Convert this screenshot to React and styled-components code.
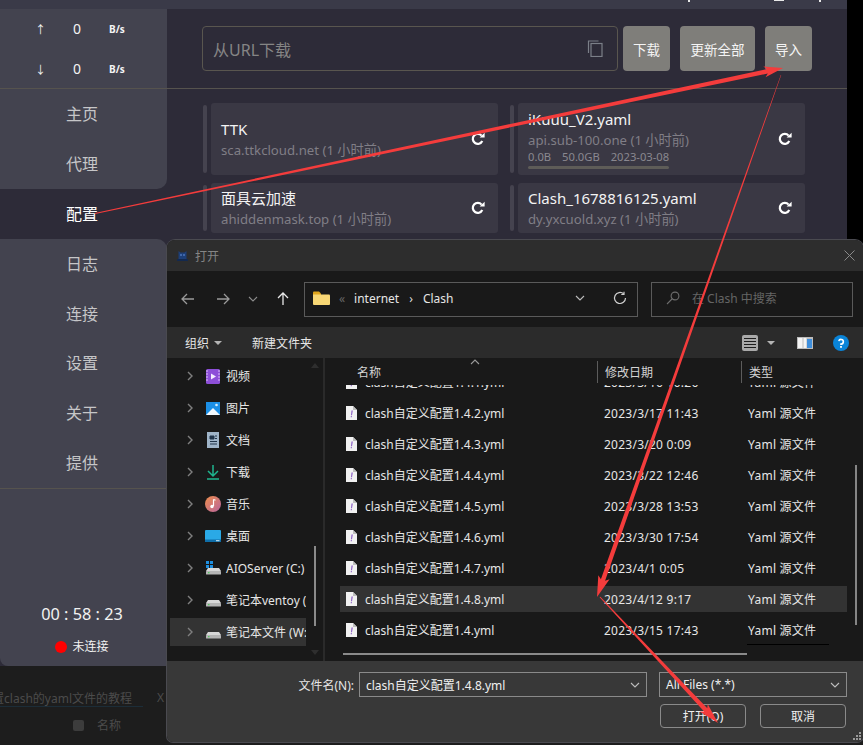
import React from 'react'
import styled, { createGlobalStyle } from 'styled-components'

const Global = createGlobalStyle`
  html, body { margin: 0; padding: 0; background: #000; }
  * { box-sizing: border-box; }
`

const UI_FONT = `"Noto Sans", "Noto Sans CJK SC", sans-serif`

const Screen = styled.div`
  position: relative;
  width: 863px;
  height: 745px;
  overflow: hidden;
  background: #000;
  font-family: ${UI_FONT};
`

/* clash window */
const AppWindow = styled.div`
  width: 847px;
  height: 666px;
  display: flex;
  flex-direction: column;
  background: #2d2b38;
`
const TopBand = styled.div`
  height: 9px;
  flex: none;
  display: flex;
  align-items: flex-start;
  background: #3a3a48;
`
const WindowMark = styled.span`
  width: ${p => p.$w}px;
  height: ${p => p.$h}px;
  margin-left: ${p => p.$left}px;
  background: #e8e8e8;
`
const Body = styled.div`
  flex: 1;
  display: grid;
  grid-template-columns: 167px 1fr;
  min-height: 0;
`
const Sidebar = styled.div`
  display: flex;
  flex-direction: column;
`
const SidePanel = styled.div`
  background: #43434f;
  border-radius: ${p => p.$radius};
  flex: ${p => (p.$grow ? 1 : 'none')};
  display: flex;
  flex-direction: column;
`
const Stats = styled.div`
  height: 80px;
  border-bottom: 1px solid #56534e;
  display: flex;
  flex-direction: column;
  justify-content: center;
  gap: 20px;
`
const StatRow = styled.div`
  display: grid;
  grid-template-columns: 35px 10px 36px 22px;
  height: 20px;
  align-items: center;
  color: #f4f4f4;
  & > i { font-style: normal; font-size: 11px; grid-column: 2; text-align: center; }
  & > span { font-size: 14px; grid-column: 3; text-align: right; }
  & > b { font-size: 10px; font-weight: 700; grid-column: 4; margin-left: 28px; white-space: nowrap; }
`
const NavItem = styled.div`
  height: 50px;
  flex: none;
  padding-bottom: 2px;
  display: flex;
  align-items: center;
  justify-content: center;
  width: 164px;
  font-size: 16px;
  color: ${p => (p.$active ? '#ffffff' : '#c6c6c8')};
`
const ActiveGap = styled.div`
  height: 50px;
  display: flex;
  align-items: center;
`
const NavList = styled.div`
  height: 250px;
  border-bottom: 1px solid #56534e;
  & > div { height: 49.75px; }
`
const StatusBox = styled.div`
  flex: 1;
  display: flex;
  flex-direction: column;
  align-items: center;
  padding-top: 114px;
  padding-right: 3px;
  color: #f2f2f2;
`
const Timer = styled.div`
  font-size: 16.3px;
  line-height: 22px;
`
const Connection = styled.div`
  margin-top: 11px;
  display: flex;
  align-items: center;
  gap: 5px;
  font-size: 12px;
  line-height: 22px;
`
const Dot = styled.span`
  width: 12px;
  height: 12px;
  border-radius: 50%;
  background: #ff0000;
`
const Main = styled.div`
  display: flex;
  flex-direction: column;
`
const Header = styled.div`
  height: 80px;
  flex: none;
  padding: 17px 0 0 35px;
  display: flex;
  align-items: flex-start;
  border-bottom: 1px solid #56534e;
`
const UrlInput = styled.div`
  width: 416px;
  height: 45px;
  margin-right: 5px;
  padding: 0 14px 0 10px;
  display: flex;
  align-items: center;
  justify-content: space-between;
  border: 1px solid #59564f;
  border-radius: 4px;
  color: #858585;
  font-size: 16px;
`
const ActionButton = styled.div`
  height: 45px;
  width: ${p => p.$w}px;
  margin-right: 10px;
  display: flex;
  align-items: center;
  justify-content: center;
  background: #7f7e7a;
  border-radius: 4px;
  color: #f4f4f4;
  font-size: 13.5px;
`
const Cards = styled.div`
  margin: 14px 0 0 36px;
  display: grid;
  grid-template-columns: 295px 295px;
  grid-template-rows: 72px 50px;
  column-gap: 12px;
  row-gap: 8px;
`
const CardWrap = styled.div`
  display: flex;
  gap: 4px;
`
const Strip = styled.div`
  width: 4px;
  margin: 2px 0;
  border-radius: 2px;
  background: #45434f;
`
const Card = styled.div`
  flex: 1;
  background: #3a3844;
  border-radius: 3px;
  padding: 0 12px 0 10px;
  display: flex;
  align-items: center;
  justify-content: space-between;
`
const CardText = styled.div`
  display: flex;
  flex-direction: column;
`
const CardTitle = styled.div`
  font-size: 15px;
  line-height: 21px;
  color: #f3f3f3;
`
const CardSub = styled.div`
  font-size: 13.2px;
  line-height: 20px;
  color: #807e86;
`
const Quota = styled.div`
  display: flex;
  gap: 11px;
  font-size: 11.2px;
  line-height: 14px;
  color: #8a8890;
`
const QuotaBar = styled.div`
  width: 141px;
  height: 3px;
  margin-top: 2px;
  border-radius: 2px;
  background: #5e5c58;
`

/* blurred page behind the window */
const BehindBar = styled.div`
  height: 79px;
  width: 167px;
  background: #1d1d1d;
  color: #4b4b4b;
  font-size: 12px;
`
const BehindTab = styled.div`
  display: flex;
  padding-top: 23px;
  gap: 14px;
`
const BehindTitle = styled.div`
  width: 143px;
  flex: none;
  height: 18px;
  white-space: nowrap;
  display: flex;
  justify-content: flex-end;
  overflow: hidden;
  padding-right: 11px;
  border-bottom: 1px solid #1c2d38;
`
const BehindHead = styled.div`
  display: flex;
  align-items: center;
  padding: 9px 0 0 73px;
  gap: 13px;
`
const BehindCheck = styled.span`
  width: 11px;
  height: 11px;
  border-radius: 2px;
  background: #3c3c3c;
`
const BackgroundFill = styled.div`
  position: absolute;
  left: 0;
  top: 666px;
  width: 863px;
  height: 79px;
  background: #1d1d1d;
`
const BehindLayer = styled.div`
  position: relative;
`

/* file dialog */
const Dialog = styled.div`
  position: absolute;
  left: 167px;
  top: 240px;
  width: 696px;
  height: 502px;
  display: flex;
  flex-direction: column;
  background: #191919;
  border-radius: 8px 8px 6px 6px;
  box-shadow: 0 0 0 1px #4a4a50;
  overflow: hidden;
  color: #e6e6e6;
  font-size: 12px;
`
const TitleBar = styled.div`
  height: 31px;
  flex: none;
  background: #2d2d2d;
  display: flex;
  align-items: center;
  padding: 0 8px 0 10px;
  gap: 7px;
  color: #858585;
`
const CloseBox = styled.span`
  margin-left: auto;
  display: flex;
`
const AddressBar = styled.div`
  height: 56px;
  flex: none;
  display: flex;
  align-items: center;
`
const NavArrows = styled.div`
  width: 137px;
  flex: none;
  display: flex;
  align-items: center;
  padding-left: 14px;
`
const ArrowSlot = styled.span`
  width: ${p => p.$w}px;
  display: flex;
  justify-content: flex-start;
`
const Crumbs = styled.div`
  width: 334px;
  height: 35px;
  flex: none;
  border: 1px solid #5a5a5a;
  padding: 0 10px 2px 8px;
  display: flex;
  align-items: center;
  font-size: 12px;
`
const CrumbSep = styled.span`
  color: ${p => p.$c};
  margin: 0 ${p => p.$m}px;
  font-size: 12px;
`
const CrumbTools = styled.div`
  margin-left: auto;
  display: flex;
  align-items: center;
  gap: 28px;
`
const Search = styled.div`
  width: 202px;
  height: 35px;
  flex: none;
  margin-left: 13px;
  border: 1px solid #5a5a5a;
  padding: 0 0 2px 14px;
  display: flex;
  align-items: center;
  gap: 12px;
  color: #656565;
  font-size: 12px;
`
const CommandBar = styled.div`
  height: 31px;
  flex: none;
  background: #2b2b2b;
  display: flex;
  align-items: center;
  padding: 0 14px 0 18px;
`
const CommandLabel = styled.span`
  display: flex;
  align-items: center;
  gap: 5px;
  margin-right: 30px;
`
const CommandTools = styled.div`
  margin-left: auto;
  display: flex;
  align-items: center;
`
const ToolGap = styled.span`
  width: ${p => p.$w}px;
`
const Caret = styled.span`
  width: 0;
  height: 0;
  border-left: 4px solid transparent;
  border-right: 4px solid transparent;
  border-top: 4px solid #b4b4b4;
`
const Content = styled.div`
  height: 303px;
  flex: none;
  display: grid;
  grid-template-columns: 158px 1fr;
`
const Tree = styled.div`
  position: relative;
  padding: 4px 0 0 3px;
  border-right: 2px solid #2a2a2a;
  overflow: hidden;
`
const TreeRow = styled.div`
  width: 136px;
  height: 28px;
  margin-bottom: 4px;
  display: flex;
  align-items: center;
  overflow: hidden;
  white-space: nowrap;
  background: ${p => (p.$selected ? '#333333' : 'transparent')};
`
const TreeChevron = styled.span`
  width: 19px;
  margin-left: 16px;
  flex: none;
  display: flex;
`
const TreeIcon = styled.span`
  width: 16px;
  margin-right: 5px;
  flex: none;
  display: flex;
  justify-content: center;
`
const ThinScroll = styled.div`
  position: absolute;
  left: 147px;
  top: 188px;
  width: 2px;
  height: 80px;
  background: #8a8a8a;
`
const ScrollArrow = styled.span`
  position: absolute;
  left: 144px;
  top: ${p => p.$top}px;
  width: 0;
  height: 0;
  border-left: 4px solid transparent;
  border-right: 4px solid transparent;
  ${p => (p.$up ? 'border-bottom' : 'border-top')}: 5px solid #2e2e2e;
`
const ListPane = styled.div`
  position: relative;
  display: flex;
  flex-direction: column;
  overflow: hidden;
`
const ListHead = styled.div`
  height: 27px;
  flex: none;
  margin-left: 15px;
  display: grid;
  grid-template-columns: 257px 144px 1fr;
  align-items: start;
  padding-top: 3px;
  color: #d4d4d4;
  & > span { height: 22px; padding-top: 2px; }
  & > span:first-child { padding-left: 17px; }
  & > span + span { border-left: 1px solid #5c5c5c; padding-left: 7px; }
`
const SortMark = styled.span`
  position: absolute;
  left: 145px;
  top: 1px;
  display: flex;
`
const Rows = styled.div`
  height: 266px;
  flex: none;
  overflow: hidden;
`
const RowsInner = styled.div`
  margin-top: -16px;
  display: flex;
  flex-direction: column;
  gap: 5px;
  &::after {
    content: '';
    width: 82px;
    height: 1px;
    margin: -4px 0 0 422px;
    background: #000;
  }
`
const FileRow = styled.div`
  margin: 0 16px 0 15px;
  height: 26px;
  flex: none;
  display: grid;
  grid-template-columns: 264px 144px 1fr;
  align-items: center;
  white-space: nowrap;
  background: ${p => (p.$selected ? '#333333' : 'transparent')};
`
const FileName = styled.span`
  display: flex;
  align-items: center;
  gap: 8px;
  padding-left: 6px;
`
const FileMeta = styled.span`
  letter-spacing: 0.25px;
`
const HScroll = styled.div`
  width: 404px;
  height: 2px;
  margin: 2px 0 0 18px;
  background: #8a8a8a;
`
const VScroll = styled.div`
  position: absolute;
  right: 6px;
  top: 107px;
  width: 2px;
  height: 160px;
  background: #858585;
`
const Footer = styled.div`
  height: 81px;
  flex: none;
  background: #383838;
  padding-top: 11px;
  display: flex;
  flex-direction: column;
  position: relative;
`
const FieldRow = styled.div`
  display: flex;
  align-items: center;
  height: 25px;
`
const FieldLabel = styled.span`
  width: 187px;
  text-align: right;
  margin-right: 5px;
  flex: none;
`
const Field = styled.div`
  width: ${p => p.$w}px;
  height: 25px;
  flex: none;
  margin-right: 12px;
  border: 1px solid #8a8a8a;
  display: flex;
  align-items: center;
  justify-content: space-between;
  padding: 0 6px;
  color: #f0f0f0;
`
const ButtonRow = styled.div`
  margin-top: 7px;
  padding-left: 493px;
  display: flex;
  gap: 14px;
`
const DialogButton = styled.div`
  width: 86px;
  height: 24px;
  border: 1px solid #8a8a8a;
  border-radius: 4px;
  display: flex;
  align-items: center;
  justify-content: center;
  color: #f0f0f0;
`
const Grip = styled.svg`
  position: absolute;
  right: 1px;
  bottom: 1px;
`
const Overlay = styled.svg`
  position: absolute;
  left: 0;
  top: 0;
  pointer-events: none;
`

/* icons */
const RefreshIcon = () => (
  <svg width="16" height="16" viewBox="0 0 16 16" fill="none">
    <path d="M12.300 10.100A5 5 0 1 1 11.600 4.600" stroke="#fff" strokeWidth="2.200" />
    <path d="M9.600 6.600h5V1.700z" fill="#fff" />
  </svg>
)
const CopyIcon = () => (
  <svg width="16" height="17" viewBox="0 0 16 17" fill="none" stroke="#7b7f88" strokeWidth="1.200">
    <path d="M1.500 13V1h10" />
    <rect x="4" y="3.500" width="11" height="13" />
  </svg>
)
const Chevron = ({ c = '#7f7f7f' }) => (
  <svg width="8" height="10" viewBox="0 0 8 10" fill="none">
    <path d="M2 1l4 4-4 4" stroke={c} strokeWidth="1.400" />
  </svg>
)
const Down = ({ c = '#bdbdbd' }) => (
  <svg width="10" height="6" viewBox="0 0 10 6" fill="none">
    <path d="M1 1l4 4 4-4" stroke={c} strokeWidth="1.100" />
  </svg>
)
const Up = ({ c }) => (
  <svg width="10" height="6" viewBox="0 0 10 6" fill="none">
    <path d="M1 5l4-4 4 4" stroke={c} strokeWidth="1.100" />
  </svg>
)
const ArrowLeft = ({ c }) => (
  <svg width="14" height="12" viewBox="0 0 14 12" fill="none" stroke={c} strokeWidth="1.300">
    <path d="M13 6H1M6 1L1 6l5 5" />
  </svg>
)
const ArrowRight = ({ c }) => (
  <svg width="14" height="12" viewBox="0 0 14 12" fill="none" stroke={c} strokeWidth="1.300">
    <path d="M1 6h12M8 1l5 5-5 5" />
  </svg>
)
const ArrowUp = () => (
  <svg width="12" height="14" viewBox="0 0 12 14" fill="none" stroke="#e8e8e8" strokeWidth="1.300">
    <path d="M6 13V1M1 6l5-5 5 5" />
  </svg>
)
const CatIcon = () => (
  <svg width="11" height="11" viewBox="0 0 11 11">
    <path d="M1.500 1l2 1.500h4L9.500 1v8h-8z" fill="#1d3f78" />
    <path d="M0 9h11v2H0z" fill="#13294f" />
    <circle cx="4" cy="5" r=".7" fill="#7fb0ff" />
    <circle cx="7" cy="5" r=".7" fill="#7fb0ff" />
  </svg>
)
const FolderIcon = () => (
  <svg width="17" height="14" viewBox="0 0 17 14">
    <path d="M0 1.500q0-1 1-1h5l2 2v2H0z" fill="#e0a51c" />
    <path d="M0 3.500h16q1 0 1 1V13q0 1-1 1H1q-1 0-1-1z" fill="#f8d775" />
  </svg>
)
const SearchIcon = () => (
  <svg width="14" height="14" viewBox="0 0 14 14" fill="none" stroke="#6d6d6d" strokeWidth="1.100">
    <circle cx="9" cy="5" r="3.900" />
    <path d="M6 8l-5 5" />
  </svg>
)
const ReloadSmall = () => (
  <svg width="14" height="14" viewBox="0 0 14 14" fill="none" stroke="#cfcfcf" strokeWidth="1.200">
    <path d="M12.500 7a5.500 5.500 0 1 1-1.800-4.100" />
    <path d="M11 .8v2.700H8.300" />
  </svg>
)
const CloseIcon = () => (
  <svg width="11" height="11" viewBox="0 0 11 11" stroke="#8a8a8a" strokeWidth="1">
    <path d="M.5.5l10 10M10.500.5l-10 10" />
  </svg>
)
const ViewIcon = () => (
  <svg width="16" height="16" viewBox="0 0 16 16">
    <rect width="16" height="16" rx="2" fill="#a9a9a9" />
    <path d="M2 3.500h12M2 6.500h12M2 9.500h12M2 12.500h12" stroke="#1d1d1d" strokeWidth="1" />
  </svg>
)
const PaneIcon = () => (
  <svg width="16" height="12" viewBox="0 0 16 12">
    <rect width="16" height="12" fill="#bcbcbc" />
    <rect x="1" y="1" width="4.500" height="10" fill="#f4f4f4" />
    <rect x="6.500" y="1" width="3" height="10" fill="#f4f4f4" />
    <rect x="10" y="2" width="5" height="9" fill="#3f8fdc" />
  </svg>
)
const HelpIcon = () => (
  <svg width="16" height="16" viewBox="0 0 16 16">
    <circle cx="8" cy="8" r="8" fill="#0a84d8" />
    <path d="M5.800 6.200A2.300 2.300 0 1 1 8 9v1" stroke="#fff" strokeWidth="1.600" fill="none" />
    <rect x="7.100" y="11" width="1.800" height="1.800" fill="#fff" />
  </svg>
)
const FileIcon = () => (
  <svg width="11" height="14" viewBox="0 0 11 14">
    <path d="M0 0h7l4 4v10H0z" fill="#f1f1f1" />
    <path d="M7 0l4 4H7z" fill="#bdbdbd" />
    <path d="M5.500 4.500h1.300L6 9.200H5zM4.800 10h1v1.200h-1z" fill="#8a5cc4" />
  </svg>
)
const VideoIcon = () => (
  <svg width="14" height="15" viewBox="0 0 14 15">
    <rect width="14" height="15" rx="1.500" fill="#8d4fd8" />
    <path d="M0 2h2M0 5h2M0 8h2M0 11h2M12 2h2M12 5h2M12 8h2M12 11h2" stroke="#d9bdf6" strokeWidth="1" />
    <path d="M5 4.500l5 3-5 3z" fill="#f3ecff" />
  </svg>
)
const PictureIcon = () => (
  <svg width="14" height="13" viewBox="0 0 14 13">
    <rect width="14" height="13" fill="#1b8fe6" />
    <path d="M0 13l7-7 7 7z" fill="#f2f8fd" />
    <circle cx="10.500" cy="3" r="1.300" fill="#d7ecfb" />
  </svg>
)
const DocIcon = () => (
  <svg width="14" height="16" viewBox="0 0 14 16">
    <path d="M1 0h12v16H1z" fill="#9fb4c8" />
    <path d="M4 4h4v3H4zM9 4h2M9 6.500h2M4 9.500h7M4 12h7" stroke="#21354a" strokeWidth="1" fill="#21354a" />
  </svg>
)
const DownloadIcon = () => (
  <svg width="14" height="15" viewBox="0 0 14 15" fill="none" stroke="#1fb58f" strokeWidth="1.500">
    <path d="M7 0v10M2 6l5 5 5-5M1 14h12" />
  </svg>
)
const MusicIcon = () => (
  <svg width="16" height="16" viewBox="0 0 16 16">
    <defs>
      <linearGradient id="mus" x1="0" y1="0" x2="1" y2="1">
        <stop offset="0" stopColor="#ee8e4c" />
        <stop offset="1" stopColor="#b8649e" />
      </linearGradient>
    </defs>
    <circle cx="8" cy="8" r="8" fill="url(#mus)" />
    <path d="M8.500 3.500v6.500" stroke="#fff" strokeWidth="1.200" />
    <path d="M8.500 3.500l2 .8" stroke="#fff" strokeWidth="1.200" />
    <circle cx="7" cy="10.500" r="1.700" fill="#fff" />
  </svg>
)
const DesktopIcon = () => (
  <svg width="16" height="12" viewBox="0 0 16 12">
    <rect width="16" height="12" rx="1" fill="#2aa9e6" />
    <rect y="9.500" width="16" height="2.500" fill="#0f6ea8" />
    <rect x="11" y="10.200" width="3.500" height="1" fill="#d6eefb" />
  </svg>
)
const DriveIcon = ({ system }) => (
  <svg width="15" height="14" viewBox="0 0 15 14">
    {system && <path d="M0 0h3v3H0zM4 0h3v3H4zM0 4h3v3H0zM4 4h3v3H4z" fill="#1e8fe0" />}
    <path d="M2 7h11l2 3H0z" fill="#d8d8d8" />
    <rect y="10" width="15" height="3.500" rx=".5" fill="#b5b5b5" />
    <rect x="2" y="11.200" width="1.500" height="1" fill="#3ccf4e" />
  </svg>
)

// tapered annotation arrow, returns polygon points
const arrowPoints = (x1, y1, x2, y2, w1, w2, headLen, headW) => {
  const len = Math.hypot(x2 - x1, y2 - y1)
  const ux = (x2 - x1) / len
  const uy = (y2 - y1) / len
  const nx = -uy
  const ny = ux
  const bx = x2 - ux * headLen
  const by = y2 - uy * headLen
  const pts = [
    [x1 + (nx * w1) / 2, y1 + (ny * w1) / 2],
    [bx + (nx * w2) / 2, by + (ny * w2) / 2],
    [bx + (nx * headW) / 2 - ux * 3, by + (ny * headW) / 2 - uy * 3],
    [x2, y2],
    [bx - (nx * headW) / 2 - ux * 3, by - (ny * headW) / 2 - uy * 3],
    [bx - (nx * w2) / 2, by - (ny * w2) / 2],
    [x1 - (nx * w1) / 2, y1 - (ny * w1) / 2],
  ]
  return pts.map(p => p.map(v => v.toFixed(1)).join(',')).join(' ')
}

const treeItems = [
  { label: '视频', icon: <VideoIcon /> },
  { label: '图片', icon: <PictureIcon /> },
  { label: '文档', icon: <DocIcon /> },
  { label: '下载', icon: <DownloadIcon /> },
  { label: '音乐', icon: <MusicIcon /> },
  { label: '桌面', icon: <DesktopIcon /> },
  { label: 'AIOServer (C:)', icon: <DriveIcon system /> },
  { label: '笔记本ventoy (', icon: <DriveIcon /> },
  { label: '笔记本文件 (W:)', icon: <DriveIcon />, selected: true },
]

const files = [
  { name: 'clash自定义配置1.4.1.yml', date: '2023/3/16 10:26' },
  { name: 'clash自定义配置1.4.2.yml', date: '2023/3/17 11:43' },
  { name: 'clash自定义配置1.4.3.yml', date: '2023/3/20 0:09' },
  { name: 'clash自定义配置1.4.4.yml', date: '2023/3/22 12:46' },
  { name: 'clash自定义配置1.4.5.yml', date: '2023/3/28 13:53' },
  { name: 'clash自定义配置1.4.6.yml', date: '2023/3/30 17:54' },
  { name: 'clash自定义配置1.4.7.yml', date: '2023/4/1 0:05' },
  { name: 'clash自定义配置1.4.8.yml', date: '2023/4/12 9:17', selected: true },
  { name: 'clash自定义配置1.4.yml', date: '2023/3/15 17:43' },
]

const App = () => (
  <Screen>
    <Global />
    <BackgroundFill />
    <BehindLayer>
      <AppWindow>
        <TopBand>
          <WindowMark $w={2} $h={2} $left={688} />
          <WindowMark $w={10} $h={1} $left={84} />
          <WindowMark $w={2} $h={2} $left={35} />
        </TopBand>
        <Body>
          <Sidebar>
            <SidePanel $radius="0 0 10px 0">
              <Stats>
                <StatRow><i>↑</i><span>0</span><b>B/s</b></StatRow>
                <StatRow><i>↓</i><span>0</span><b>B/s</b></StatRow>
              </Stats>
              <NavItem>主页</NavItem>
              <NavItem>代理</NavItem>
            </SidePanel>
            <ActiveGap>
              <NavItem $active>配置</NavItem>
            </ActiveGap>
            <SidePanel $radius="0 10px 0 8px" $grow>
              <NavList>
                <NavItem>日志</NavItem>
                <NavItem>连接</NavItem>
                <NavItem>设置</NavItem>
                <NavItem>关于</NavItem>
                <NavItem>提供</NavItem>
              </NavList>
              <StatusBox>
                <Timer>00 : 58 : 23</Timer>
                <Connection><Dot />未连接</Connection>
              </StatusBox>
            </SidePanel>
          </Sidebar>
          <Main>
            <Header>
              <UrlInput>从URL下载<CopyIcon /></UrlInput>
              <ActionButton $w={47}>下载</ActionButton>
              <ActionButton $w={75}>更新全部</ActionButton>
              <ActionButton $w={47}>导入</ActionButton>
            </Header>
            <Cards>
              <CardWrap>
                <Strip />
                <Card>
                  <CardText>
                    <CardTitle>TTK</CardTitle>
                    <CardSub>sca.ttkcloud.net (1 小时前)</CardSub>
                  </CardText>
                  <RefreshIcon />
                </Card>
              </CardWrap>
              <CardWrap>
                <Strip />
                <Card>
                  <CardText>
                    <CardTitle>iKuuu_V2.yaml</CardTitle>
                    <CardSub>api.sub-100.one (1 小时前)</CardSub>
                    <Quota><span>0.0B</span><span>50.0GB</span><span>2023-03-08</span></Quota>
                    <QuotaBar />
                  </CardText>
                  <RefreshIcon />
                </Card>
              </CardWrap>
              <CardWrap>
                <Strip />
                <Card>
                  <CardText>
                    <CardTitle>面具云加速</CardTitle>
                    <CardSub>ahiddenmask.top (1 小时前)</CardSub>
                  </CardText>
                  <RefreshIcon />
                </Card>
              </CardWrap>
              <CardWrap>
                <Strip />
                <Card>
                  <CardText>
                    <CardTitle>Clash_1678816125.yaml</CardTitle>
                    <CardSub>dy.yxcuold.xyz (1 小时前)</CardSub>
                  </CardText>
                  <RefreshIcon />
                </Card>
              </CardWrap>
            </Cards>
          </Main>
        </Body>
      </AppWindow>
      <BehindBar>
        <BehindTab>
          <BehindTitle>配置clash的yaml文件的教程</BehindTitle>
          <span>X</span>
        </BehindTab>
        <BehindHead><BehindCheck />名称</BehindHead>
      </BehindBar>
    </BehindLayer>

    <Dialog>
      <TitleBar><CatIcon />打开<CloseBox><CloseIcon /></CloseBox></TitleBar>
      <AddressBar>
        <NavArrows>
          <ArrowSlot $w={35}><ArrowLeft c="#9a9a9a" /></ArrowSlot>
          <ArrowSlot $w={32}><ArrowRight c="#9a9a9a" /></ArrowSlot>
          <ArrowSlot $w={29}><Down c="#8d8d8d" /></ArrowSlot>
          <ArrowSlot $w={20}><ArrowUp /></ArrowSlot>
        </NavArrows>
        <Crumbs>
          <FolderIcon />
          <CrumbSep $c="#666" $m={9}>«</CrumbSep>
          internet
          <CrumbSep $c="#ddd" $m={10}>›</CrumbSep>
          Clash
          <CrumbTools><Down /><ReloadSmall /></CrumbTools>
        </Crumbs>
        <Search><SearchIcon />在 Clash 中搜索</Search>
      </AddressBar>
      <CommandBar>
        <CommandLabel>组织 <Caret /></CommandLabel>
        <CommandLabel>新建文件夹</CommandLabel>
        <CommandTools>
          <ViewIcon />
          <ToolGap $w={9} />
          <Caret />
          <ToolGap $w={22} />
          <PaneIcon />
          <ToolGap $w={20} />
          <HelpIcon />
        </CommandTools>
      </CommandBar>
      <Content>
        <Tree>
          {treeItems.map(item => (
            <TreeRow key={item.label} $selected={item.selected}>
              <TreeChevron><Chevron /></TreeChevron>
              <TreeIcon>{item.icon}</TreeIcon>
              {item.label}
            </TreeRow>
          ))}
          <ScrollArrow $up $top={5} />
          <ThinScroll />
          <ScrollArrow $top={292} />
        </Tree>
        <ListPane>
          <SortMark><Up c="#9a9a9a" /></SortMark>
          <ListHead>
            <span>名称</span>
            <span>修改日期</span>
            <span>类型</span>
          </ListHead>
          <Rows>
            <RowsInner>
              {files.map(f => (
                <FileRow key={f.name} $selected={f.selected}>
                  <FileName><FileIcon />{f.name}</FileName>
                  <FileMeta>{f.date}</FileMeta>
                  <FileMeta>Yaml 源文件</FileMeta>
                </FileRow>
              ))}
            </RowsInner>
          </Rows>
          <HScroll />
          <VScroll />
        </ListPane>
      </Content>
      <Footer>
        <FieldRow>
          <FieldLabel>文件名(N):</FieldLabel>
          <Field $w={288}>clash自定义配置1.4.8.yml<Down /></Field>
          <Field $w={188}>All Files (*.*)<Down /></Field>
        </FieldRow>
        <ButtonRow>
          <DialogButton>打开(O)</DialogButton>
          <DialogButton>取消</DialogButton>
        </ButtonRow>
        <Grip width="10" height="10" viewBox="0 0 10 10" fill="#9a9a9a">
          <path d="M7 1h2v2H7zM4 4h2v2H4zM7 4h2v2H7zM1 7h2v2H1zM4 7h2v2H4zM7 7h2v2H7z" />
        </Grip>
      </Footer>
    </Dialog>

    <Overlay width="863" height="745" viewBox="0 0 863 745">
      <polygon points={arrowPoints(95, 213.500, 783, 68, 1.200, 4.500, 16, 11)} fill="#f43c3c" />
      <polygon points={arrowPoints(781, 75, 597, 597, 0.400, 4.500, 18, 12)} fill="#f43c3c" />
      <polygon points={arrowPoints(600, 597, 718, 723, 1, 4.500, 18, 11)} fill="#f43c3c" />
    </Overlay>
  </Screen>
)

export default App
